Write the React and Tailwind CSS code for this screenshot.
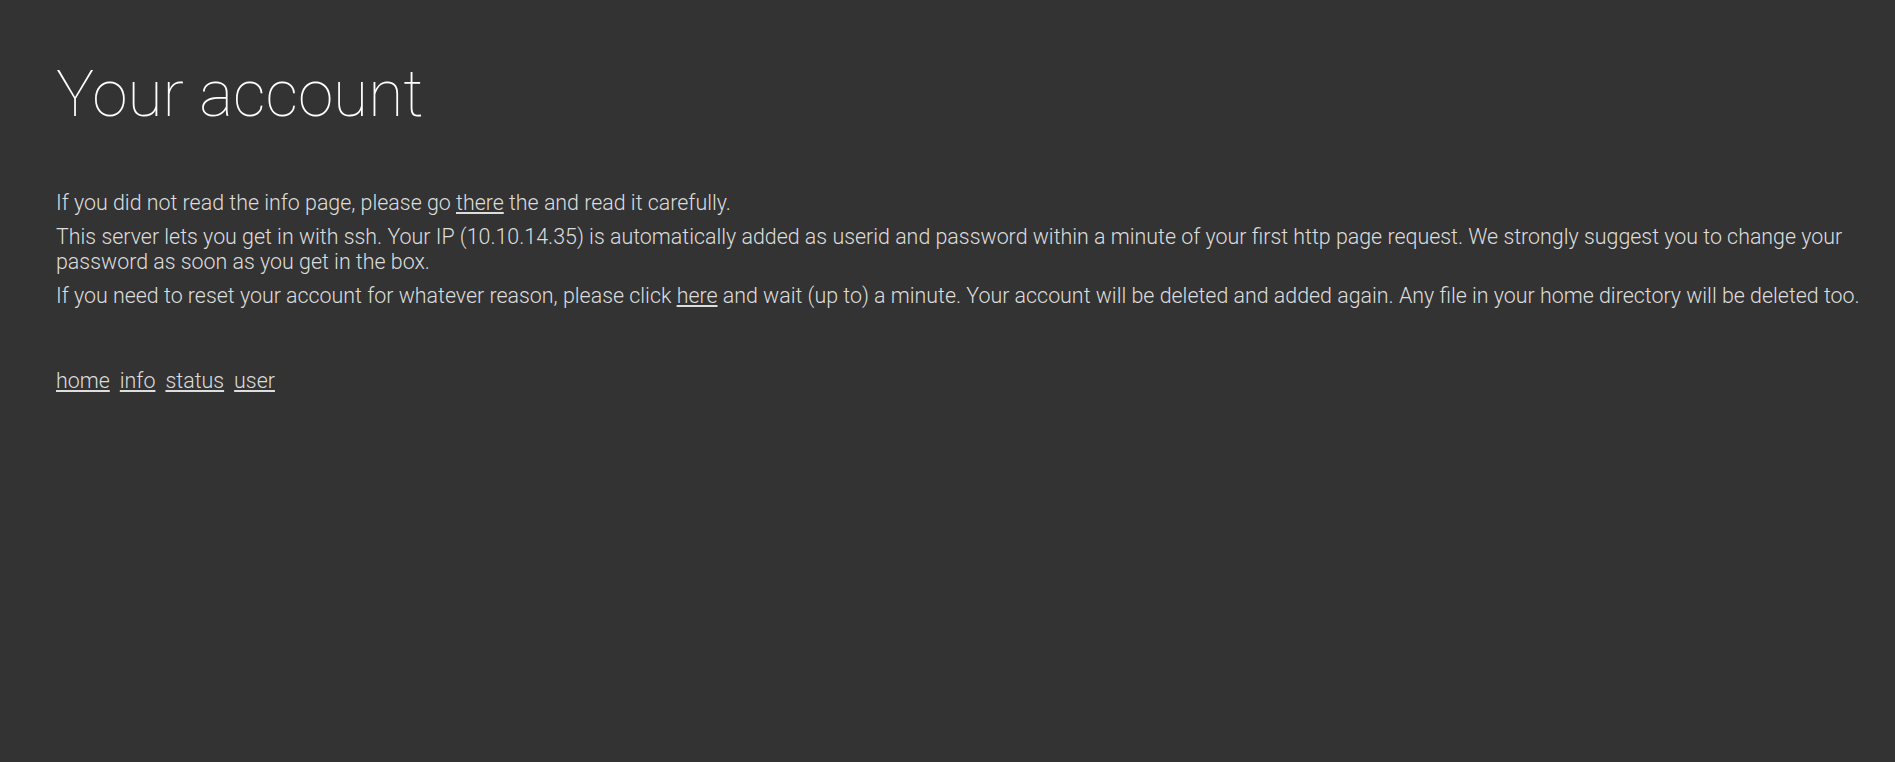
export default function App() {
  return (
    <div className="min-h-[762px] bg-[#333333] pl-[56px] pr-[20px] pt-[57px] text-[#dddddd] font-['Roboto',sans-serif] font-light">
      <h1 className="text-[64px] leading-[1.2] font-thin text-white">Your account</h1>
      <div className="mt-[56px] text-[21.4px] leading-[25px]">
        <p className="mb-[9px]">If you did not read the info page, please go <a href="#" className="underline">there</a> the and read it carefully.</p>
        <p className="mb-[9px] max-w-[1815px]">This server lets you get in with ssh. Your IP (10.10.14.35) is automatically added as userid and password within a minute of your first http page request. We strongly suggest you to change your password as soon as you get in the box.</p>
        <p>If you need to reset your account for whatever reason, please click <a href="#" className="underline">here</a> and wait (up to) a minute. Your account will be deleted and added again. Any file in your home directory will be deleted too.</p>
      </div>
      <nav className="mt-[60px] flex gap-[10px] text-[21.4px] leading-[25px]">
        <a href="#" className="underline">home</a>
        <a href="#" className="underline">info</a>
        <a href="#" className="underline">status</a>
        <a href="#" className="underline">user</a>
      </nav>
    </div>
  );
}
